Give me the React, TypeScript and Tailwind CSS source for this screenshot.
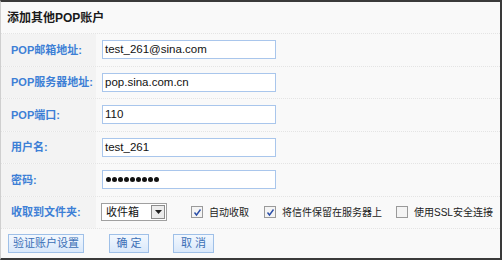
import React from 'react'

const font = { fontFamily: '"Liberation Sans", "Noto Sans CJK SC", sans-serif' }

interface RowProps {
  label: string
  children: React.ReactNode
}

function Row({ label, children }: RowProps) {
  return (
    <div className="flex h-[32.5px] border-b border-dotted border-[#e4e4e4]">
      <div className="w-[95px] shrink-0 bg-[#f3f3f3] pl-[10px] flex items-center whitespace-nowrap text-[11px] font-bold text-[#3d7fd6]">
        {label}
      </div>
      <div className="flex-1 flex items-center pl-[6px]">{children}</div>
    </div>
  )
}

function Field({ value, password }: { value: string; password?: boolean }) {
  return (
    <div className="w-[174px] h-[19px] border border-[#a9c6ec] bg-white pl-[2px] flex items-center text-[11.5px] text-[#111]">
      {password ? (
        <span className="flex gap-[1px] pl-[1px]">
          {Array.from({ length: 9 }).map((_, i) => (
            <span key={i} className="w-[5px] h-[5px] rounded-full bg-[#111]" />
          ))}
        </span>
      ) : (
        value
      )}
    </div>
  )
}

function Check({ checked, label }: { checked: boolean; label: string }) {
  return (
    <div className="flex items-center gap-[6px] whitespace-nowrap text-[10px] text-[#222]">
      <span className="w-[12px] h-[12px] border border-[#9a9a9a] bg-[#f4f4f4] flex items-center justify-center">
        {checked && (
          <svg width="9" height="9" viewBox="0 0 9 9">
            <path d="M1.5 4.5 L3.5 7 L7.5 1.5" stroke="#2b4fa8" strokeWidth="1.4" fill="none" />
          </svg>
        )}
      </span>
      <span>{label}</span>
    </div>
  )
}

function Btn({ children, w }: { children: React.ReactNode; w: string }) {
  return (
    <button
      className={`${w} h-[19px] border border-[#9fc0e8] bg-gradient-to-b from-[#f3f8fe] to-[#d9e8fa] whitespace-nowrap text-[11px] text-[#3b6fb6] flex items-center justify-center`}
      style={font}
    >
      {children}
    </button>
  )
}

export default function App() {
  return (
    <div
      className="w-[502px] h-[260px] bg-[#f9f9f9] border-t-2 border-r-2 border-b-2 border-l border-t-[#3a3a3a] border-r-[#3a3a3a] border-b-[#3a3a3a] border-l-[#cfcfcf] flex flex-col"
      style={font}
    >
      <div className="h-[32px] pl-[6px] flex items-center text-[12px] font-bold text-[#1a1a1a] border-b border-dotted border-[#e4e4e4]">
        添加其他POP账户
      </div>
      <Row label="POP邮箱地址:">
        <Field value="test_261@sina.com" />
      </Row>
      <Row label="POP服务器地址:">
        <Field value="pop.sina.com.cn" />
      </Row>
      <Row label="POP端口:">
        <Field value="110" />
      </Row>
      <Row label="用户名:">
        <Field value="test_261" />
      </Row>
      <Row label="密码:">
        <Field value="" password />
      </Row>
      <Row label="收取到文件夹:">
        <div className="flex items-center">
          <div className="w-[66px] h-[18px] border border-[#a0a0a0] bg-white flex items-center justify-between pl-[4px] pr-[1px] text-[11px] text-[#111] ml-[-1px]">
            <span>收件箱</span>
            <span className="w-[14px] h-[14px] border border-[#8c8c8c] bg-[#ececec] flex items-center justify-center">
              <svg width="7" height="4" viewBox="0 0 7 4">
                <path d="M0 0 L7 0 L3.5 4 Z" fill="#222" />
              </svg>
            </span>
          </div>
          <div className="ml-[24px]">
            <Check checked label="自动收取" />
          </div>
          <div className="ml-[15px]">
            <Check checked label="将信件保留在服务器上" />
          </div>
          <div className="ml-[14px]">
            <Check checked={false} label="使用SSL安全连接" />
          </div>
        </div>
      </Row>
      <div className="flex items-center pl-[7px] pt-[5px]">
        <Btn w="w-[76px]">验证账户设置</Btn>
        <div className="ml-[25px]">
          <Btn w="w-[40px]">确 定</Btn>
        </div>
        <div className="ml-[24px]">
          <Btn w="w-[41px]">取 消</Btn>
        </div>
      </div>
    </div>
  )
}
